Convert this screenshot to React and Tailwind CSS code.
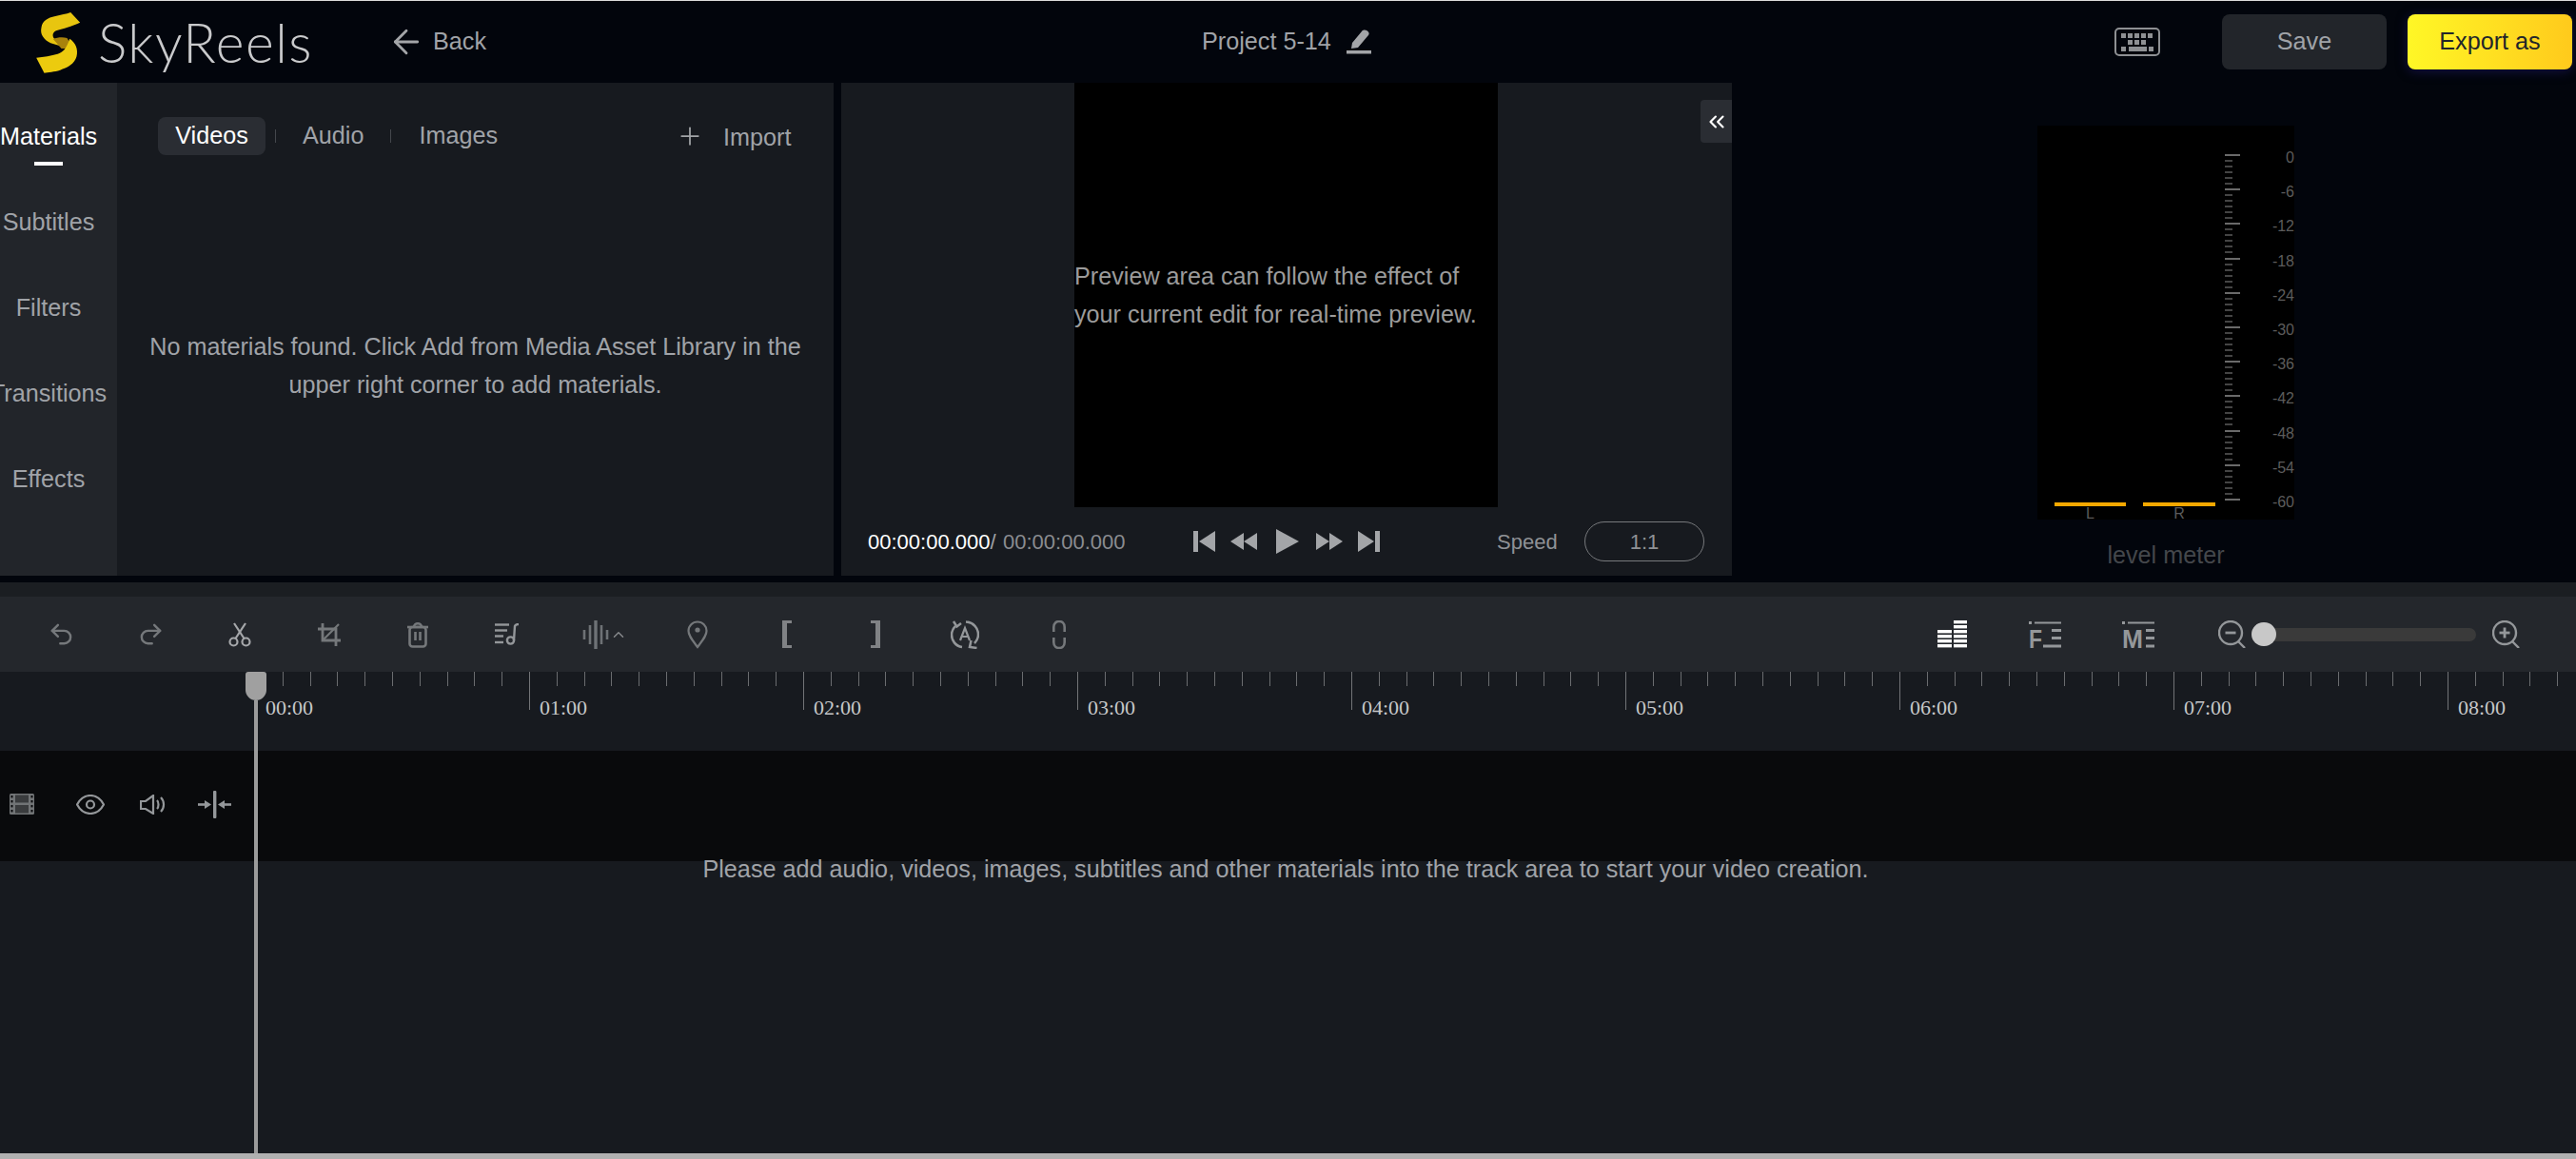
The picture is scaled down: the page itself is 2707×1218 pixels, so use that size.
import React from 'react';
import { ArrowLeft, Plus, Undo2, Redo2, ChevronUp, ChevronsLeft } from 'lucide-react';

const Logo = () => (
  <svg width="47" height="65" viewBox="25 10 140 195" className="shrink-0">
    <path d="M133 13 L163 45 C135 58 110 64 90 70 C78 74 74 84 80 94 L118 124 L70 110 C48 98 36 82 41 60 C44 40 60 30 85 25 C102 21 120 18 133 13 Z" fill="#e8c50f" />
    <path d="M78 97 C90 92 108 90 122 94 L136 118 C125 126 112 128 104 127 Z" fill="#a8820c" />
    <path d="M130 96 C148 108 158 128 152 152 C146 176 122 188 100 195 C82 201 62 201 50 204 L25 156 C48 153 72 150 92 144 C108 139 120 128 130 96 Z" fill="#eccb0e" />
  </svg>
);

const PenIcon = () => (
  <svg width="28" height="26" viewBox="0 0 28 26" fill="#a3a5a8" className="shrink-0">
    <path d="M17 2 C18 0 21 0 23 1.5 C25 3 25 5 24 6 L13 19 L6 20 L7 14 Z" />
    <rect x="1" y="22" width="26" height="3.5" />
  </svg>
);

const KeyboardIcon = () => (
  <svg width="48" height="30" viewBox="0 0 48 30" className="shrink-0">
    <rect x="1" y="1" width="46" height="28" rx="4" fill="none" stroke="#8e9093" strokeWidth="2" />
    <g fill="#8e9093">
      <rect x="7" y="6" width="5" height="5" /><rect x="14" y="6" width="5" height="5" /><rect x="21" y="6" width="5" height="5" /><rect x="28" y="6" width="5" height="5" /><rect x="35" y="6" width="5" height="5" />
      <rect x="14" y="13" width="5" height="5" /><rect x="21" y="13" width="5" height="5" /><rect x="28" y="13" width="5" height="5" />
      <rect x="7" y="20" width="5" height="5" /><rect x="15" y="20" width="19" height="5" /><rect x="36" y="20" width="5" height="5" />
    </g>
  </svg>
);

const SkipBack = () => (
  <svg width="23" height="24" viewBox="0 0 23 24" fill="#a3a5a8"><rect x="0" y="1" width="5" height="22" /><path d="M23 1 V23 L6 12 Z" /></svg>
);
const SkipForward = () => (
  <svg width="23" height="24" viewBox="0 0 23 24" fill="#a3a5a8"><rect x="18" y="1" width="5" height="22" /><path d="M0 1 V23 L17 12 Z" /></svg>
);
const Rewind = () => (
  <svg width="28" height="20" viewBox="0 0 28 20" fill="#a3a5a8"><path d="M14 1 V19 L0 10 Z" /><path d="M28 1 V19 L14 10 Z" /></svg>
);
const Forward = () => (
  <svg width="28" height="20" viewBox="0 0 28 20" fill="#a3a5a8"><path d="M0 1 V19 L14 10 Z" /><path d="M14 1 V19 L28 10 Z" /></svg>
);
const Play = () => (
  <svg width="24" height="26" viewBox="0 0 24 26" fill="#a3a5a8"><path d="M0 0 V26 L24 13 Z" /></svg>
);

const ScissorsIcon = () => (
  <svg width="26" height="26" viewBox="0 0 26 26" fill="none" stroke="#a5a7aa" strokeWidth="2.2">
    <circle cx="6.5" cy="20.5" r="4" /><circle cx="19.5" cy="20.5" r="4" />
    <path d="M8.5 17 L19 1" /><path d="M17.5 17 L7 1" />
  </svg>
);
const CropIcon = () => (
  <svg width="26" height="26" viewBox="0 0 26 26" fill="none" stroke="#75787b" strokeWidth="2.8">
    <path d="M6 1 V19 H25" /><path d="M20 25 V7 H1" /><path d="M23 2 L6 19" strokeWidth="2.2" />
  </svg>
);
const TrashIcon = () => (
  <svg width="24" height="28" viewBox="0 0 24 28" fill="none" stroke="#75787b" strokeWidth="2.6">
    <path d="M1 6 H23" /><path d="M8 6 C8 1 16 1 16 6" />
    <rect x="3.5" y="6" width="17" height="20.5" rx="3" />
    <path d="M9.5 11 V20" /><path d="M14.5 11 V20" />
  </svg>
);
const MusicListIcon = () => (
  <svg width="26" height="24" viewBox="0 0 26 24" fill="none" stroke="#94979a" strokeWidth="2.4">
    <path d="M0 1.5 H15" /><path d="M0 7.5 H13" /><path d="M0 13.5 H9" /><path d="M0 20 H9" />
    <circle cx="16.5" cy="18" r="3.6" /><path d="M20 18 L21 3 C21.5 1.5 23 1 25 1" />
  </svg>
);
const WaveIcon = () => (
  <svg width="28" height="30" viewBox="0 0 28 30" fill="none" stroke="#6e7276" strokeWidth="2.6">
    <path d="M2 10 V20" /><path d="M8 5 V25" /><path d="M14 0 V30" strokeWidth="3.4" /><path d="M20 5 V25" /><path d="M26 10 V20" />
  </svg>
);
const PinIcon = () => (
  <svg width="22" height="30" viewBox="0 0 22 30" fill="none" stroke="#75787b" strokeWidth="2.2">
    <path d="M11 28 C5 20 1.5 16 1.5 11 a9.5 9.5 0 0 1 19 0 C20.5 16 17 20 11 28 Z" />
    <circle cx="11" cy="10" r="2.6" fill="#75787b" stroke="none" />
  </svg>
);
const BracketLeft = () => (
  <svg width="10" height="29" viewBox="0 0 10 29" fill="#808285"><path d="M0 0 H10 V3 H5 V26 H10 V29 H0 Z" /></svg>
);
const BracketRight = () => (
  <svg width="10" height="29" viewBox="0 0 10 29" fill="#808285"><path d="M10 0 H0 V3 H5 V26 H0 V29 H10 Z" /></svg>
);
const SyncIcon = () => (
  <svg width="30" height="30" viewBox="0 0 30 30" fill="none" stroke="#94979a" strokeWidth="2.5">
    <path d="M12 28 C5 27 1 21 1 15 C1 11 3 8 5 6" /><path d="M3 1 L6.5 6.5 L11 3" />
    <path d="M16 1.5 C24 2 29 8 29 15 C29 19 27 22 25 24" /><path d="M27.5 29 L20 28 L21.5 21" />
    <path d="M10 21 L15 8 L20 21 M11.5 17 H18.5" strokeWidth="2.2" />
  </svg>
);
const LinkIcon = () => (
  <svg width="14" height="30" viewBox="0 0 14 30" fill="none" stroke="#75787b" strokeWidth="2.6">
    <path d="M1.3 12 V7 C1.3 -1 12.7 -1 12.7 7 V12" /><path d="M1.3 18 V23 C1.3 31 12.7 31 12.7 23 V18" />
  </svg>
);

const BarsIcon = () => (
  <svg width="31" height="29" viewBox="0 0 31 29" fill="#ffffff">
    {[0, 5, 10, 15, 20, 25].map((y) => <rect key={y} x="17" y={y} width="14" height="3.4" />)}
    {[10, 15, 20, 25].map((y) => <rect key={y} x="0" y={y} width="15" height="3.4" />)}
  </svg>
);
const FLinesIcon = () => (
  <svg width="34" height="36" viewBox="0 0 34 36" className="-mb-[7px]">
    <rect x="0" y="1" width="3" height="3" fill="#94979a" /><rect x="6" y="1.5" width="28" height="2" fill="#94979a" />
    <text x="0" y="29" fontSize="28" fontWeight="700" fill="#94979a" fontFamily="Liberation Sans" textLength="14" lengthAdjust="spacingAndGlyphs">F</text>
    <rect x="24" y="9" width="10" height="3" fill="#94979a" /><rect x="24" y="17" width="10" height="3" fill="#94979a" /><rect x="15" y="25.5" width="19" height="3" fill="#94979a" />
  </svg>
);
const MLinesIcon = () => (
  <svg width="34" height="36" viewBox="0 0 34 36" className="-mb-[7px]">
    <rect x="0" y="1" width="3" height="3" fill="#94979a" /><rect x="6" y="1.5" width="28" height="2" fill="#94979a" />
    <text x="0" y="29" fontSize="28" fontWeight="700" fill="#94979a" fontFamily="Liberation Sans" textLength="22" lengthAdjust="spacingAndGlyphs">M</text>
    <rect x="25" y="9" width="9" height="3" fill="#94979a" /><rect x="25" y="17" width="9" height="3" fill="#94979a" /><rect x="25" y="25.5" width="9" height="3" fill="#94979a" />
  </svg>
);
const ZoomIcon = ({ plus }) => (
  <svg width="30" height="29" viewBox="0 0 30 29" fill="none" stroke="#94979a" strokeWidth="2.4">
    <circle cx="13" cy="13" r="12" /><path d="M21 22 L28 29" />
    <path d="M7.5 13 H18.5" strokeWidth="2.8" />
    {plus && <path d="M13 7.5 V18.5" strokeWidth="2.8" />}
  </svg>
);

const FilmIcon = () => (
  <svg width="26" height="22" viewBox="0 0 26 22">
    <rect width="26" height="22" rx="1.5" fill="#717476" />
    {[2, 7, 12, 17].map((y) => (
      <g key={y} fill="#0a0b0d"><rect x="1.5" y={y} width="2" height="2.4" /><rect x="22.5" y={y} width="2" height="2.4" /></g>
    ))}
    <rect x="6" y="1.5" width="14" height="8" fill="#3a3c3e" /><rect x="6" y="12" width="14" height="8.5" fill="#3a3c3e" />
  </svg>
);
const EyeIcon = () => (
  <svg width="30" height="21" viewBox="0 0 30 21" fill="none" stroke="#94979a" strokeWidth="2.2">
    <path d="M1 10.5 C5 3 10 1 15 1 C20 1 25 3 29 10.5 C25 18 20 20 15 20 C10 20 5 18 1 10.5 Z" />
    <circle cx="15" cy="10.5" r="4" />
  </svg>
);
const SpeakerIcon = () => (
  <svg width="28" height="21" viewBox="0 0 28 21" fill="none" stroke="#94979a" strokeWidth="2.2">
    <path d="M1 7 H6 L14 1 V20 L6 15 H1 Z" />
    <path d="M18 6 C20 8 20 13 18 15" /><path d="M22 3 C26 7 26 14 22 18" />
  </svg>
);
const SplitIcon = () => (
  <svg width="35" height="29" viewBox="0 0 35 29" fill="#94979a">
    <rect x="16" y="0" width="3.4" height="29" rx="1" />
    <rect x="0" y="13.2" width="8" height="2.6" /><path d="M14 14.5 L7 10 V19 Z" />
    <rect x="27" y="13.2" width="8" height="2.6" /><path d="M21 14.5 L28 10 V19 Z" />
  </svg>
);

const LevelMeter = () => {
  const labels = ['0', '-6', '-12', '-18', '-24', '-30', '-36', '-42', '-48', '-54', '-60'];
  return (
    <div className="flex h-[414px] w-[270px] bg-black pl-[18px]">
      <div className="flex w-[179px] shrink-0 items-start gap-[18px] pt-[396px]">
        <div className="flex w-[75px] flex-col items-center">
          <div className="h-[4px] w-full bg-[#f5a800]" />
          <span className="text-[16px] leading-[16px] text-[#5a5a5a]">L</span>
        </div>
        <div className="flex w-[76px] flex-col items-center">
          <div className="h-[4px] w-full bg-[#f5a800]" />
          <span className="text-[16px] leading-[16px] text-[#5a5a5a]">R</span>
        </div>
      </div>
      <div className="flex w-[20px] shrink-0 flex-col pt-[30px]">
        {labels.map((l, i) => (
          <div key={l} className="flex h-[36.2px] shrink-0 flex-col gap-[4px]">
            <div className="h-[2px] w-[16px] bg-[#6a6a6a]" />
            {i < 10 && [0, 1, 2, 3, 4].map((m) => <div key={m} className="h-[2px] w-[8px] bg-[#444444]" />)}
          </div>
        ))}
      </div>
      <div className="flex flex-1 flex-col pt-[24px] text-right">
        {labels.map((l) => (
          <div key={l} className="h-[36.2px] shrink-0 text-[16px] leading-[20px] text-[#5c5c5c]">{l}</div>
        ))}
      </div>
    </div>
  );
};

const Ruler = () => {
  const minutes = ['00:00', '01:00', '02:00', '03:00', '04:00', '05:00', '06:00', '07:00', '08:00'];
  return (
    <div className="flex h-[83px] overflow-hidden bg-[#171a1f] pl-[268px]">
      {minutes.map((m) => (
        <div key={m} className="flex w-[288px] shrink-0 flex-col">
          <div className="flex h-[40px] items-start">
            <div className="h-[40px] w-[28.8px] shrink-0 border-l border-[#727477]" />
            {[1, 2, 3, 4, 5, 6, 7, 8, 9].map((t) => (
              <div key={t} className="h-[15px] w-[28.8px] shrink-0 border-l border-[#6a6c6f]" />
            ))}
          </div>
          <div className="-mt-[14px] pl-[11px] font-['Liberation_Serif',serif] text-[22px] leading-[24px] text-[#c6c7c9]">{m}</div>
        </div>
      ))}
    </div>
  );
};

export default function App() {
  const tools = [
    <Undo2 key="undo" size={29} strokeWidth={2} color="#75787b" />,
    <Redo2 key="redo" size={29} strokeWidth={2} color="#75787b" />,
    <ScissorsIcon key="cut" />,
    <CropIcon key="crop" />,
    <TrashIcon key="trash" />,
    <MusicListIcon key="music" />,
  ];

  return (
    <div className="flex h-screen w-full flex-col overflow-hidden border-t border-[#dcdcdc] bg-[#02050c] font-['Liberation_Sans',Arial,sans-serif] text-[25.2px] text-[#a0a3a8]">
      <header className="flex h-[86px] shrink-0 items-center">
        <div className="flex w-[1263px] shrink-0 items-center pl-[38px]">
          <Logo />
          <span className="ml-[18px] w-[224px] shrink-0 whitespace-nowrap font-['Lato',sans-serif] text-[57px] font-light leading-none tracking-[1.5px] text-[#c9cacc]">SkyReels</span>
          <ArrowLeft size={40} strokeWidth={1.7} color="#a3a5a8" className="ml-[80px]" />
          <span className="ml-[8px] text-[#a0a3a8]">Back</span>
        </div>
        <span className="text-[#a0a3a8]">Project 5-14</span>
        <span className="ml-[15px]"><PenIcon /></span>
        <div className="ml-auto flex items-center pr-[4px]">
          <KeyboardIcon />
          <button className="ml-[65px] h-[58px] w-[173px] rounded-lg bg-[#22252a] text-[#a0a3a8]">Save</button>
          <button className="ml-[22px] h-[58px] w-[173px] rounded-lg bg-gradient-to-r from-[#fff726] to-[#ffca1c] text-[#22252a] shadow-[0_2px_12px_rgba(40,30,120,0.5)]">Export as</button>
        </div>
      </header>

      <div className="flex h-[518px] shrink-0">
        <aside className="flex h-full w-[123px] shrink-0 flex-col bg-[#22252a] pt-[36px]">
          {['Materials', 'Subtitles', 'Filters', 'Transitions', 'Effects'].map((s, i) => (
            <div key={s} className="flex h-[90px] w-[102px] shrink-0 flex-col items-center">
              <span className={i === 0 ? 'whitespace-nowrap leading-[40px] text-white' : 'whitespace-nowrap leading-[40px] text-[#a0a3a8]'}>{s}</span>
              {i === 0 && <div className="mt-[7px] h-[4px] w-[30px] bg-white" />}
            </div>
          ))}
        </aside>

        <section className="flex h-full w-[753px] shrink-0 flex-col bg-[#171a1f]">
          <div className="mt-[36px] flex h-[40px] items-center pl-[43px]">
            <div className="flex h-[40px] w-[113px] items-center justify-center rounded-lg bg-[#2a2d33] text-white">Videos</div>
            <div className="ml-[10px] h-[14px] w-px bg-[#44474c]" />
            <span className="ml-[28px]">Audio</span>
            <div className="ml-[28px] h-[14px] w-px bg-[#44474c]" />
            <span className="ml-[29px]">Images</span>
            <Plus size={30} strokeWidth={1.4} color="#a3a5a8" className="ml-[187px]" />
            <span className="ml-[20px] mt-[3px]">Import</span>
          </div>
          <p className="mt-[181px] text-center leading-[40px]">
            No materials found. Click Add from Media Asset Library in the<br />upper right corner to add materials.
          </p>
        </section>

        <div className="w-[8px] shrink-0" />

        <section className="relative flex h-full w-[936px] shrink-0 flex-col bg-[#171a1f]">
          <div className="ml-[245px] flex h-[446px] w-[445px] shrink-0 flex-col bg-black pt-[183px] leading-[40px] text-[#9b9b9b]">
            <p className="whitespace-nowrap">Preview area can follow the effect of</p>
            <p className="whitespace-nowrap">your current edit for real-time preview.</p>
          </div>
          <div className="flex flex-1 items-center pl-[28px]">
            <span className="w-[142px] shrink-0 text-[22px] text-white">00:00:00.000<span className="text-[#a0a3a8]">/</span></span>
            <span className="w-[200px] shrink-0 text-[22px] text-[#8a8c90]">00:00:00.000</span>
            <SkipBack />
            <span className="ml-[16px]"><Rewind /></span>
            <span className="ml-[20px]"><Play /></span>
            <span className="ml-[18px]"><Forward /></span>
            <span className="ml-[16px]"><SkipForward /></span>
            <span className="ml-[123px] w-[92px] shrink-0 text-[22px] text-[#8f9195]">Speed</span>
            <div className="flex h-[42px] w-[126px] items-center justify-center rounded-full border border-[#77797c] text-[22px] text-[#8f9195]">1:1</div>
          </div>
          <div className="absolute right-0 top-[18px] flex h-[45px] w-[33px] items-center justify-center rounded-l bg-[#2a2d33]">
            <ChevronsLeft size={26} strokeWidth={2} color="#ffffff" />
          </div>
        </section>

        <section className="flex h-full flex-1 flex-col pl-[321px] pt-[45px]">
          <LevelMeter />
          <div className="w-[270px] pt-[23px] text-center leading-[28px] text-[#44474b]">level meter</div>
        </section>
      </div>

      <div className="h-[7px] shrink-0" />

      <div className="relative flex flex-1 flex-col bg-[#171a1f]">
        <div className="h-[15px] shrink-0 bg-[#1b1e22]" />
        <div className="flex h-[79px] shrink-0 items-center bg-[#24272c] pl-[18px]">
          {tools.map((t, i) => (
            <div key={i} className="flex w-[93.6px] shrink-0 justify-center">{t}</div>
          ))}
          <div className="flex w-[106.6px] shrink-0 items-center pl-[32px]">
            <WaveIcon />
            <ChevronUp size={18} strokeWidth={2} color="#85888b" className="ml-[1px]" />
          </div>
          <div className="flex w-[93.6px] shrink-0 justify-center"><PinIcon /></div>
          <div className="flex w-[93.6px] shrink-0 justify-center"><BracketLeft /></div>
          <div className="flex w-[93.6px] shrink-0 justify-center"><BracketRight /></div>
          <div className="flex w-[93.6px] shrink-0 justify-center"><SyncIcon /></div>
          <div className="flex w-[104px] shrink-0 justify-center"><LinkIcon /></div>
          <div className="ml-auto flex items-center pr-[58px]">
            <div className="flex w-[98px] justify-center"><BarsIcon /></div>
            <div className="flex w-[98px] justify-center"><FLinesIcon /></div>
            <div className="flex w-[98px] justify-center"><MLinesIcon /></div>
            <span className="ml-[35px]"><ZoomIcon /></span>
            <div className="ml-[5px] flex h-[14px] w-[236px] items-center rounded-full bg-[#3a3a3a]">
              <div className="h-[25px] w-[26px] shrink-0 rounded-full bg-[#c8c8c8]" />
            </div>
            <span className="ml-[17px]"><ZoomIcon plus /></span>
          </div>
        </div>
        <Ruler />
        <div className="flex h-[116px] shrink-0 items-center bg-[#090a0c] pb-[4px] pl-[10px]">
          <FilmIcon />
          <span className="ml-[44px]"><EyeIcon /></span>
          <span className="ml-[37px]"><SpeakerIcon /></span>
          <span className="ml-[33px]"><SplitIcon /></span>
        </div>
        <p className="pr-[5px] text-center leading-[16px]">Please add audio, videos, images, subtitles and other materials into the track area to start your video creation.</p>
        <div className="absolute bottom-0 left-0 right-0 h-[6px] bg-[#b0b0b0]" />
        <div className="absolute bottom-[6px] left-[258px] top-[94px] flex w-[22px] flex-col items-center">
          <div className="h-[30px] w-[22px] shrink-0 rounded-b-[11px] rounded-t-[3px] bg-[#a0a0a0]" />
          <div className="w-[4px] flex-1 bg-[#9b9b9b]" />
        </div>
      </div>
    </div>
  );
}
